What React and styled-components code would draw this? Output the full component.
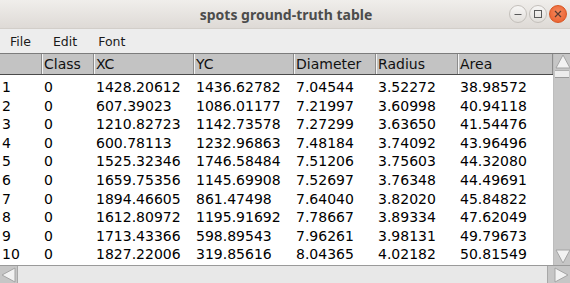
import React from 'react';
import styled, { createGlobalStyle } from 'styled-components';

const GlobalStyle = createGlobalStyle`
  html, body { margin: 0; padding: 0; background: #ededed; }
  body { width: 570px; height: 283px; overflow: hidden; }
`;

const columns = [42, 52, 100, 100, 82, 82, 95];
const headers = ['', 'Class', 'XC', 'YC', 'Diameter', 'Radius', 'Area'];

const rows = [
  ['1', '0', '1428.20612', '1436.62782', '7.04544', '3.52272', '38.98572'],
  ['2', '0', '607.39023', '1086.01177', '7.21997', '3.60998', '40.94118'],
  ['3', '0', '1210.82723', '1142.73578', '7.27299', '3.63650', '41.54476'],
  ['4', '0', '600.78113', '1232.96863', '7.48184', '3.74092', '43.96496'],
  ['5', '0', '1525.32346', '1746.58484', '7.51206', '3.75603', '44.32080'],
  ['6', '0', '1659.75356', '1145.69908', '7.52697', '3.76348', '44.49691'],
  ['7', '0', '1894.46605', '861.47498', '7.64040', '3.82020', '45.84822'],
  ['8', '0', '1612.80972', '1195.91692', '7.78667', '3.89334', '47.62049'],
  ['9', '0', '1713.43366', '598.89543', '7.96261', '3.98131', '49.79673'],
  ['10', '0', '1827.22006', '319.85616', '8.04365', '4.02182', '50.81549'],
];

const Window = styled.div`
  width: 570px;
  height: 283px;
  display: flex;
  flex-direction: column;
  background: #ededed;
  font-family: "DejaVu Sans", sans-serif;
`;

const TitleBar = styled.div`
  height: 29px;
  flex: none;
  display: flex;
  align-items: center;
  justify-content: center;
  position: relative;
  background: linear-gradient(#f0eeeb, #dedad6);
  border-bottom: 1px solid #d2cec9;
  box-sizing: border-box;
`;

const Title = styled.div`
  font-family: "Noto Sans", sans-serif;
  font-weight: 700;
  font-size: 14px;
  color: #4c4c4c;
  padding-left: 2px;
`;

const Controls = styled.div`
  position: absolute;
  right: 3px;
  top: 5px;
  display: flex;
  gap: 2px;
`;

const Ctl = styled.div`
  width: 18px;
  height: 18px;
  border-radius: 50%;
  box-sizing: border-box;
  border: 1px solid ${p => (p.$close ? '#d8541f' : '#c4c0bb')};
  background: ${p => (p.$close ? 'radial-gradient(circle at 50% 40%, #f58a5e, #e95a28)' : 'linear-gradient(#f7f6f5, #e2dfdb)')};
  display: flex;
  align-items: center;
  justify-content: center;
`;

const MenuBar = styled.div`
  height: 24px;
  flex: none;
  display: flex;
  align-items: center;
  background: #ededed;
  border-bottom: 1px solid #7c7c7c;
`;

const MenuItem = styled.div`
  font-size: 12.5px;
  color: #1a1a1a;
  padding: 0 10px;
  margin-right: ${p => p.$gap || 0}px;
`;

const Body = styled.div`
  flex: 1;
  display: grid;
  grid-template-columns: 553px 17px;
  grid-template-rows: 1fr 18px;
  min-height: 0;
`;

const TableArea = styled.div`
  display: flex;
  flex-direction: column;
  background: #fff;
  overflow: hidden;
`;

const HeaderRow = styled.div`
  display: flex;
  height: 20px;
  background: #c3c3c3;
  border-bottom: 1px solid #4a4a4a;
  flex: none;
`;

const HeaderCell = styled.div`
  width: ${p => p.$w}px;
  flex: none;
  box-sizing: border-box;
  border-left: 1px solid #f4f4f4;
  border-right: 1px solid #8c8c8c;
  font-size: 14px;
  line-height: 20px;
  padding-left: 1px;
  color: #111;
  white-space: nowrap;
  overflow: hidden;
  &:first-child { border-left: none; }
`;

const Rows = styled.div`
  padding-top: 3px;
`;

const Row = styled.div`
  display: flex;
  height: 18.6px;
`;

const Cell = styled.div`
  width: ${p => p.$w}px;
  flex: none;
  box-sizing: border-box;
  padding-left: 2px;
  font-size: 14px;
  line-height: 18.6px;
  color: #000;
  white-space: nowrap;
  overflow: hidden;
`;

const VScroll = styled.div`
  background: #c6c6c6;
  display: flex;
  flex-direction: column;
  justify-content: space-between;
  border-left: 1px solid #bdbdbd;
  box-sizing: border-box;
`;

const ArrowBox = styled.div`
  width: 17px;
  height: ${p => p.$h || 16}px;
  display: flex;
  align-items: center;
  justify-content: center;
  flex: none;
`;

const Thumb = styled.div`
  height: 6px;
  margin: 0 1px;
  background: #ececec;
  border-top: 1px solid #b0b0b0;
  border-bottom: 1px solid #9a9a9a;
`;

const HScroll = styled.div`
  background: #c6c6c6;
  display: flex;
  align-items: stretch;
  border-top: 1px solid #9a9a9a;
  box-sizing: border-box;
`;

const HThumb = styled.div`
  flex: 1;
  margin-right: 5px;
  background: #e8e8e8;
  border-left: 1px solid #a8a8a8;
  border-right: 1px solid #a8a8a8;
`;

const Corner = styled.div`
  background: #c6c6c6;
  border-top: 1px solid #9a9a9a;
  display: flex;
  align-items: center;
  justify-content: center;
`;

const Tri = ({ dir }) => {
  const pts = {
    up: '1,14 8,1 15,14',
    down: '1,1 8,14 15,1',
    left: '14,1 1,8 14,15',
    right: '1,1 14,8 1,15',
  }[dir];
  return (
    <svg width="16" height="16" viewBox="0 0 16 16">
      <polygon points={pts} fill="#f2f2f2" stroke="#a4a4a4" strokeWidth="1" />
    </svg>
  );
};

export default function App() {
  return (
    <Window>
      <GlobalStyle />
      <TitleBar>
        <Title>spots ground-truth table</Title>
        <Controls>
          <Ctl>
            <svg width="10" height="10" viewBox="0 0 10 10">
              <line x1="1.5" y1="5.5" x2="8.5" y2="5.5" stroke="#5a5a5a" strokeWidth="1" />
            </svg>
          </Ctl>
          <Ctl>
            <svg width="10" height="10" viewBox="0 0 10 10">
              <rect x="1.5" y="1.5" width="7" height="7" fill="none" stroke="#5a5a5a" strokeWidth="1" />
            </svg>
          </Ctl>
          <Ctl $close>
            <svg width="10" height="10" viewBox="0 0 10 10">
              <path d="M2 2 L8 8 M8 2 L2 8" stroke="#5a3a30" strokeWidth="1.2" />
            </svg>
          </Ctl>
        </Controls>
      </TitleBar>
      <MenuBar>
        <MenuItem $gap={2}>File</MenuItem>
        <MenuItem $gap={1}>Edit</MenuItem>
        <MenuItem>Font</MenuItem>
      </MenuBar>
      <Body>
        <TableArea>
          <HeaderRow>
            {headers.map((h, i) => (
              <HeaderCell key={i} $w={columns[i]}>{h}</HeaderCell>
            ))}
          </HeaderRow>
          <Rows>
            {rows.map((r, ri) => (
              <Row key={ri}>
                {r.map((v, ci) => (
                  <Cell key={ci} $w={columns[ci]}>{v}</Cell>
                ))}
              </Row>
            ))}
          </Rows>
        </TableArea>
        <VScroll>
          <div>
            <ArrowBox $h={16}><Tri dir="up" /></ArrowBox>
            <Thumb />
          </div>
          <ArrowBox $h={16}><Tri dir="down" /></ArrowBox>
        </VScroll>
        <HScroll>
          <ArrowBox $h={17}><Tri dir="left" /></ArrowBox>
          <HThumb />
        </HScroll>
        <Corner><Tri dir="right" /></Corner>
      </Body>
    </Window>
  );
}
